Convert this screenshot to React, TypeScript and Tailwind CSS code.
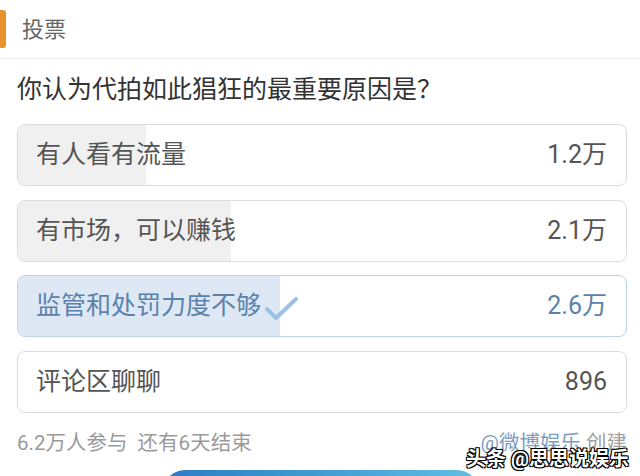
import React from 'react';

type Option = {
  label: string;
  count: string;
  fill: number;
  selected?: boolean;
};

const options: Option[] = [
  { label: '有人看有流量', count: '1.2万', fill: 128 },
  { label: '有市场，可以赚钱', count: '2.1万', fill: 213 },
  { label: '监管和处罚力度不够', count: '2.6万', fill: 262, selected: true },
  { label: '评论区聊聊', count: '896', fill: 0 },
];

const CheckMark = () => (
  <svg width="36" height="28" viewBox="0 0 36 28" className="ml-[2px] mt-[6px]">
    <polyline
      points="4,14 13,23 33,4"
      fill="none"
      stroke="#9dc1e4"
      strokeWidth="4"
      strokeLinecap="round"
      strokeLinejoin="round"
    />
  </svg>
);

const App: React.FC = () => {
  return (
    <div
      className="w-[640px] h-[476px] overflow-hidden bg-white"
      style={{ fontFamily: 'Roboto, "Noto Sans CJK SC", sans-serif' }}
    >
      {/* Header */}
      <div className="flex items-center h-[59px] border-b border-[#ececec]">
        <div className="w-[6px] h-[38px] bg-[#e8922c] rounded-r-[3px]" />
        <span className="ml-[16px] text-[22px] text-[#666]">投票</span>
      </div>

      <div className="pl-[17px] pr-[13px]">
        {/* Question */}
        <div className="mt-[15px] text-[25px] leading-[32px] text-[#333]">
          你认为代拍如此猖狂的最重要原因是？
        </div>

        {/* Options */}
        <div className="mt-[18px] flex flex-col gap-[13.5px]">
          {options.map((opt) => (
            <div
              key={opt.label}
              className={
                opt.selected
                  ? 'relative h-[62px] rounded-[8px] border border-[#bcd3e8] overflow-hidden'
                  : 'relative h-[62px] rounded-[8px] border border-[#dcdcdc] overflow-hidden'
              }
            >
              {opt.fill > 0 && (
                <div
                  className={
                    opt.selected
                      ? 'absolute left-0 top-0 bottom-0 bg-[#dde8f4]'
                      : 'absolute left-0 top-0 bottom-0 bg-[#f0f0f0]'
                  }
                  style={{ width: opt.fill }}
                />
              )}
              <div className="relative flex items-center justify-between h-full pl-[18px] pr-[19px]">
                <div className="flex items-center">
                  <span
                    className={
                      opt.selected
                        ? 'text-[25px] text-[#5a82ac]'
                        : 'text-[25px] text-[#555]'
                    }
                  >
                    {opt.label}
                  </span>
                  {opt.selected && <CheckMark />}
                </div>
                <span
                  className={
                    opt.selected
                      ? 'text-[25px] text-[#5a82ac]'
                      : 'text-[25px] text-[#555]'
                  }
                >
                  {opt.count}
                </span>
              </div>
            </div>
          ))}
        </div>

        {/* Footer */}
        <div className="relative mt-[16px] flex items-center justify-between text-[20.5px] leading-[28px]">
          <span className="text-[#9a9a9a]">6.2万人参与&nbsp;&nbsp;还有6天结束</span>
          <span>
            <span className="text-[#7d9cc0]">@微博娱乐</span>
            <span className="text-[#a0a0a0]"> 创建</span>
          </span>
          <span className="absolute right-[-2px] top-[18px] text-[20px] leading-[24px] text-white font-bold [text-shadow:1px_1px_0_#000,-1px_-1px_0_#000,1px_-1px_0_#000,-1px_1px_0_#000,0_0_2px_#000]">
            头条 @思思说娱乐
          </span>
        </div>
      </div>

      {/* Bottom button */}
      <div className="mt-[13px] ml-[163px] w-[316px] h-[44px] rounded-full bg-gradient-to-r from-[#2d7cc2] via-[#3f9dd3] to-[#62bfe0]" />
    </div>
  );
};

export default App;
